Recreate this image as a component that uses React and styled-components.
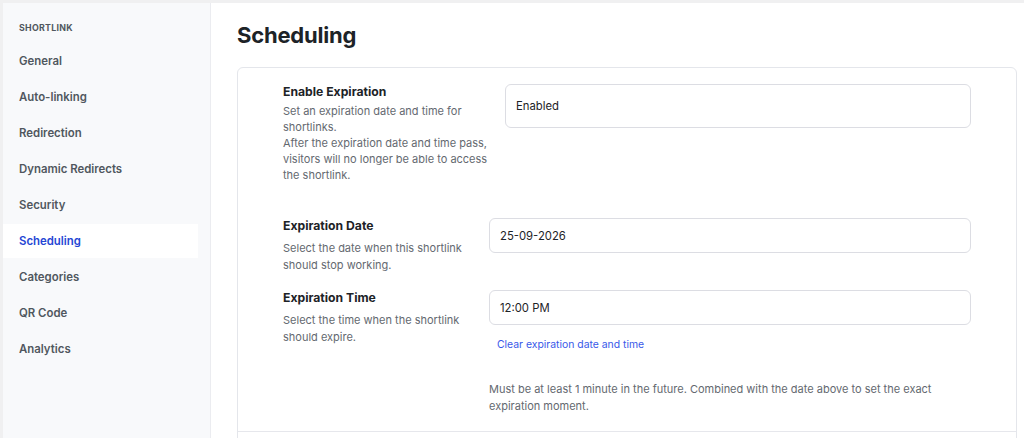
import React from "react";
import styled, { createGlobalStyle } from "styled-components";

const Global = createGlobalStyle`
  html, body { margin: 0; padding: 0; background: #ffffff; }
  body { font-family: Inter, "Noto Sans", "Liberation Sans", sans-serif; -webkit-font-smoothing: antialiased; }
  * { box-sizing: border-box; }
`;

const Page = styled.div`
  display: flex;
  min-height: 438px;
  height: 438px;
  overflow: hidden;
  background: #f0f0f1;
  padding: 3px 0 0 3px;
`;

const Sidebar = styled.nav`
  width: 208px;
  flex: none;
  background: #f8f9fb;
  border-right: 1px solid #ebecf0;
  padding: 19px 12px 0 0;
`;

const SideHeading = styled.div`
  font-size: 8.8px;
  line-height: 12px;
  font-weight: 700;
  letter-spacing: 0.3px;
  text-transform: uppercase;
  color: #50575e;
  padding-left: 16px;
  margin-bottom: 10px;
`;

const NavList = styled.div`
  display: flex;
  flex-direction: column;
  gap: 2px;
`;

const NavItem = styled.div`
  height: 34px;
  display: flex;
  align-items: center;
  padding-left: 16px;
  font-size: 11.4px;
  font-weight: 600;
  color: ${(p) => (p.$active ? "#2546d4" : "#50575e")};
  background: ${(p) => (p.$active ? "#ffffff" : "transparent")};
`;

const Main = styled.main`
  flex: 1;
  background: #ffffff;
  padding: 18px 7px 0 26px;
`;

const Title = styled.h1`
  margin: 0 0 18px;
  font-size: 22px;
  line-height: 28px;
  font-weight: 700;
  color: #1d2327;
  letter-spacing: -0.2px;
`;

const Card = styled.section`
  border: 1px solid #e4e6eb;
  border-radius: 6px;
  background: #ffffff;
`;

const CardBody = styled.div`
  padding: 16px 45px 16px 45px;
  display: flex;
  flex-direction: column;
`;

const CardFooter = styled.div`
  border-top: 1px solid #e6e7ec;
  height: 40px;
`;

const Row = styled.div`
  display: grid;
  grid-template-columns: ${(p) => p.$label}px 1fr;
  column-gap: ${(p) => p.$gap}px;
  align-items: start;
  margin-top: ${(p) => p.$top || 0}px;
`;

const LabelCol = styled.div`
  display: flex;
  flex-direction: column;
`;

const Label = styled.div`
  font-size: 12.2px;
  line-height: 16px;
  font-weight: 700;
  color: #1d2327;
`;

const Desc = styled.p`
  margin: ${(p) => p.$mt}px 0 0;
  font-size: 11px;
  line-height: ${(p) => p.$lh}px;
  color: #646970;
`;

const Field = styled.div`
  height: ${(p) => p.$h}px;
  display: flex;
  align-items: center;
  padding-left: 10px;
  border: 1px solid #dcdde3;
  border-radius: 6px;
  font-size: 11.3px;
  color: #1d2327;
  background: #ffffff;
`;

const ControlCol = styled.div`
  display: flex;
  flex-direction: column;
`;

const ClearLink = styled.a`
  margin: 13px 0 0 8px;
  font-size: 10.4px;
  line-height: 14px;
  color: #3858e9;
  text-decoration: none;
  cursor: pointer;
`;

const Help = styled.p`
  margin: 29px 0 0;
  font-size: 11px;
  line-height: 17px;
  color: #646970;
`;

const nav = [
  "General",
  "Auto-linking",
  "Redirection",
  "Dynamic Redirects",
  "Security",
  "Scheduling",
  "Categories",
  "QR Code",
  "Analytics",
];

export default function App() {
  return (
    <>
      <Global />
      <Page>
        <Sidebar>
          <SideHeading>Shortlink</SideHeading>
          <NavList>
            {nav.map((n) => (
              <NavItem key={n} $active={n === "Scheduling"}>
                {n}
              </NavItem>
            ))}
          </NavList>
        </Sidebar>
        <Main>
          <Title>Scheduling</Title>
          <Card>
            <CardBody>
              <Row $label={208} $gap={14}>
                <LabelCol>
                  <Label>Enable Expiration</Label>
                  <Desc $mt={3} $lh={16}>
                    Set an expiration date and time for shortlinks.
                    <br />
                    After the expiration date and time pass, visitors will no longer be able to access the shortlink.
                  </Desc>
                </LabelCol>
                <Field $h={44}>Enabled</Field>
              </Row>
              <Row $label={186} $gap={20} $top={35}>
                <LabelCol>
                  <Label>Expiration Date</Label>
                  <Desc $mt={6} $lh={17}>
                    Select the date when this shortlink should stop working.
                  </Desc>
                </LabelCol>
                <Field $h={35}>25-09-2026</Field>
              </Row>
              <Row $label={186} $gap={20} $top={16}>
                <LabelCol>
                  <Label>Expiration Time</Label>
                  <Desc $mt={6} $lh={17}>
                    Select the time when the shortlink should expire.
                  </Desc>
                </LabelCol>
                <ControlCol>
                  <Field $h={35}>12:00 PM</Field>
                  <ClearLink>Clear expiration date and time</ClearLink>
                  <Help>
                    Must be at least 1 minute in the future. Combined with the date above to set the exact expiration moment.
                  </Help>
                </ControlCol>
              </Row>
            </CardBody>
            <CardFooter />
          </Card>
        </Main>
      </Page>
    </>
  );
}
